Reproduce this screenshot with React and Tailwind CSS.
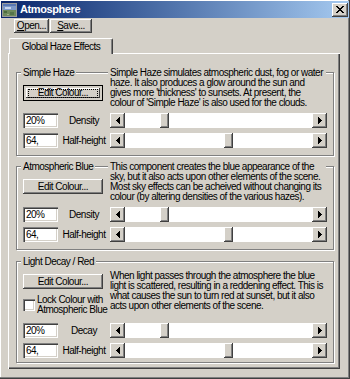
import React from "react";

const raised =
  "shadow-[inset_-1px_-1px_#404040,inset_1px_1px_#ffffff,inset_-2px_-2px_#808080]";
const sunken =
  "shadow-[inset_1px_1px_#808080,inset_2px_2px_#404040,inset_-1px_-1px_#ffffff,inset_-2px_-2px_#d4d0c8]";
const etched =
  "border border-[#808080] shadow-[1px_1px_0_#ffffff,inset_1px_1px_0_#ffffff]";

function Arrow({ dir }) {
  return (
    <div
      className={`w-[15px] h-[15px] shrink-0 bg-[#d4d0c8] flex items-center justify-center ${raised}`}
    >
      <svg width="4" height="7" viewBox="0 0 4 7" shapeRendering="crispEdges">
        {dir === "left" ? (
          <path d="M3 0h1v7H3zM2 1h1v5H2zM1 2h1v3H1zM0 3h1v1H0z" fill="#000" />
        ) : (
          <path d="M0 0h1v7H0zM1 1h1v5H1zM2 2h1v3H2zM3 3h1v1H3z" fill="#000" />
        )}
      </svg>
    </div>
  );
}

function Scroll({ offset }) {
  return (
    <div className="flex w-[217px] h-[15px] shrink-0">
      <Arrow dir="left" />
      <div className="flex-1 flex bg-white">
        <div className={offset} />
        <div className={`w-[9px] h-full bg-[#d4d0c8] ${raised}`} />
      </div>
      <Arrow dir="right" />
    </div>
  );
}

function Row({ value, label, offset, className = "" }) {
  return (
    <div className={`flex items-center h-[15px] ${className}`}>
      <div
        className={`w-[35px] h-[15px] shrink-0 bg-white pl-[3px] flex items-center ${sunken}`}
      >
        {value}
      </div>
      <div className="w-[52px] shrink-0 text-center">{label}</div>
      <Scroll offset={offset} />
    </div>
  );
}

function EditButton({ focused = false, className = "" }) {
  if (focused) {
    return (
      <div
        className={`w-[80px] h-[16px] bg-[#d4d0c8] border border-black p-[2px] flex ${className}`}
      >
        <div
          className={`flex-1 flex items-center justify-center shadow-[inset_-1px_-1px_#404040,inset_1px_1px_#ffffff]`}
        >
          <div className="w-[70px] h-[9px] border border-dotted border-black flex items-center justify-center">
            Edit Colour...
          </div>
        </div>
      </div>
    );
  }
  return (
    <div
      className={`w-[80px] h-[15px] bg-[#d4d0c8] flex items-center justify-center ${raised} ${className}`}
    >
      Edit Colour...
    </div>
  );
}

function Title({ children }) {
  return (
    <span className="self-start -ml-[2px] px-[2px] h-[10px] bg-[#d4d0c8] whitespace-nowrap">
      {children}
    </span>
  );
}

function Desc({ lines, cover = true }) {
  return (
    <div
      className={`ml-[5px] w-[218px] pl-[2px] whitespace-nowrap ${cover ? "bg-[#d4d0c8]" : ""}`}
    >
      {lines.map((l, i) => (
        <div key={i} className="h-[10px]">
          {l}
        </div>
      ))}
    </div>
  );
}

function Icon() {
  return (
    <svg width="15" height="14" viewBox="0 0 15 14" shapeRendering="crispEdges">
      <rect x="0" y="0" width="15" height="14" fill="#9a9a9a" />
      <rect x="1" y="1" width="13" height="6" fill="#7d98c8" />
      <rect x="1" y="1" width="13" height="2" fill="#5a78b4" />
      <rect x="3" y="4" width="6" height="2" fill="#c8d6ec" />
      <rect x="1" y="7" width="13" height="6" fill="#6f8a5c" />
      <rect x="2" y="8" width="3" height="2" fill="#4c6a3e" />
      <rect x="8" y="9" width="4" height="3" fill="#56744a" />
      <rect x="5" y="11" width="2" height="1" fill="#a0b08a" />
    </svg>
  );
}

export default function App() {
  return (
    <div className="w-[350px] h-[379px] bg-[#d4d0c8] p-[1px] flex flex-col font-['Liberation_Sans',Arial,sans-serif] text-[10px] leading-[10px] tracking-[-0.5px] text-black shadow-[inset_-1px_-1px_#404040,inset_-2px_-2px_#808080,inset_1px_1px_#ffffff]">
      {/* Title bar */}
      <div className="h-[17px] shrink-0 flex items-center bg-linear-to-r from-[#0a246a] to-[#a6caf0] pl-[1px] pr-[1px]">
        <Icon />
        <span className="ml-[3px] text-white font-bold text-[11px] leading-[11px] tracking-[-0.4px]">
          Atmosphere
        </span>
        <div
          className={`ml-auto w-[16px] h-[14px] bg-[#d4d0c8] flex items-center justify-center ${raised}`}
        >
          <svg width="8" height="7" viewBox="0 0 8 7" shapeRendering="crispEdges">
            <path
              d="M0 0h2v1H0zM6 0h2v1H6zM1 1h2v1H1zM5 1h2v1H5zM2 2h4v1H2zM3 3h2v1H3zM2 4h4v1H2zM1 5h2v1H1zM5 5h2v1H5zM0 6h2v1H0zM6 6h2v1H6z"
              fill="#000"
            />
          </svg>
        </div>
      </div>

      {/* Toolbar */}
      <div className="flex gap-[1px] ml-[13px] mt-[1px]">
        <div
          className={`w-[35px] h-[14px] bg-[#d4d0c8] flex items-center justify-center ${raised}`}
        >
          <span>
            <u>O</u>pen...
          </span>
        </div>
        <div
          className={`w-[42px] h-[14px] bg-[#d4d0c8] flex items-center justify-center ${raised}`}
        >
          <span>
            <u>S</u>ave...
          </span>
        </div>
      </div>

      {/* Tabs */}
      <div className="mt-[5px] ml-[7px] w-[332px] flex flex-col">
        <div className="relative z-10 ml-[1px] -mb-[1px] w-[104px] h-[16px] bg-[#d4d0c8] border-t border-l border-white border-r border-r-[#404040] rounded-tl-[2px] rounded-tr-[2px] shadow-[inset_-1px_0_#808080] flex items-center justify-center">
          Global Haze Effects
        </div>
        <div className="w-[332px] h-[316px] bg-[#d4d0c8] shadow-[inset_1px_1px_#ffffff,inset_-1px_-1px_#404040,inset_-2px_-2px_#808080] pt-[19px] pl-[8px] flex flex-col">
          {/* Group 1 */}
          <div className={`w-[318px] pl-[6px] pb-[7px] flex flex-col ${etched}`}>
            <div className="flex -mt-[5px] h-[40px]">
              <div className="w-[80px] flex flex-col">
                <Title>Simple Haze</Title>
                <EditButton focused className="mt-[7px]" />
              </div>
              <Desc
                lines={[
                  "Simple Haze simulates atmospheric dust, fog or water",
                  "haze. It also produces a glow around the sun and",
                  "gives more 'thickness' to sunsets. At present, the",
                  "colour of 'Simple Haze' is also used for the clouds.",
                ]}
              />
            </div>
            <Row className="mt-[5px]" value="20%" label="Density" offset="w-[35px]" />
            <Row className="mt-[5px]" value="64," label="Half-height" offset="w-[99px]" />
          </div>

          {/* Group 2 */}
          <div className={`mt-[10px] w-[318px] pl-[6px] pb-[7px] flex flex-col ${etched}`}>
            <div className="flex -mt-[5px] h-[40px]">
              <div className="w-[80px] flex flex-col">
                <Title>Atmospheric Blue</Title>
                <EditButton className="mt-[7px]" />
              </div>
              <Desc
                lines={[
                  "This component creates the blue appearance of the",
                  "sky, but it also acts upon other elements of the scene.",
                  "Most sky effects can be acheived without changing its",
                  "colour (by altering densities of the various hazes).",
                ]}
              />
            </div>
            <Row className="mt-[5px]" value="20%" label="Density" offset="w-[35px]" />
            <Row className="mt-[5px]" value="64," label="Half-height" offset="w-[99px]" />
          </div>

          {/* Group 3 */}
          <div className={`mt-[11px] w-[318px] pl-[6px] pb-[4px] flex flex-col ${etched}`}>
            <div className="flex -mt-[5px] h-[10px]">
              <Title>Light Decay / Red</Title>
            </div>
            <div className="flex mt-[4px]">
              <div className="w-[80px] flex flex-col">
                <EditButton className="mt-[3px]" />
                <div className="flex items-center mt-[6px]">
                  <div className={`w-[12px] h-[12px] shrink-0 bg-white ${sunken}`} />
                  <div className="ml-[2px] whitespace-nowrap">
                    <div className="h-[10px]">Lock Colour with</div>
                    <div className="h-[10px]">Atmospheric Blue</div>
                  </div>
                </div>
              </div>
              <Desc
                cover={false}
                lines={[
                  "When light passes through the atmosphere the blue",
                  "light is scattered, resulting in a reddening effect. This is",
                  "what causes the sun to turn red at sunset, but it also",
                  "acts upon other elements of the scene.",
                ]}
              />
            </div>
            <Row className="mt-[8px]" value="20%" label="Decay" offset="w-[35px]" />
            <Row className="mt-[5px]" value="64," label="Half-height" offset="w-[99px]" />
          </div>
        </div>
      </div>
    </div>
  );
}
